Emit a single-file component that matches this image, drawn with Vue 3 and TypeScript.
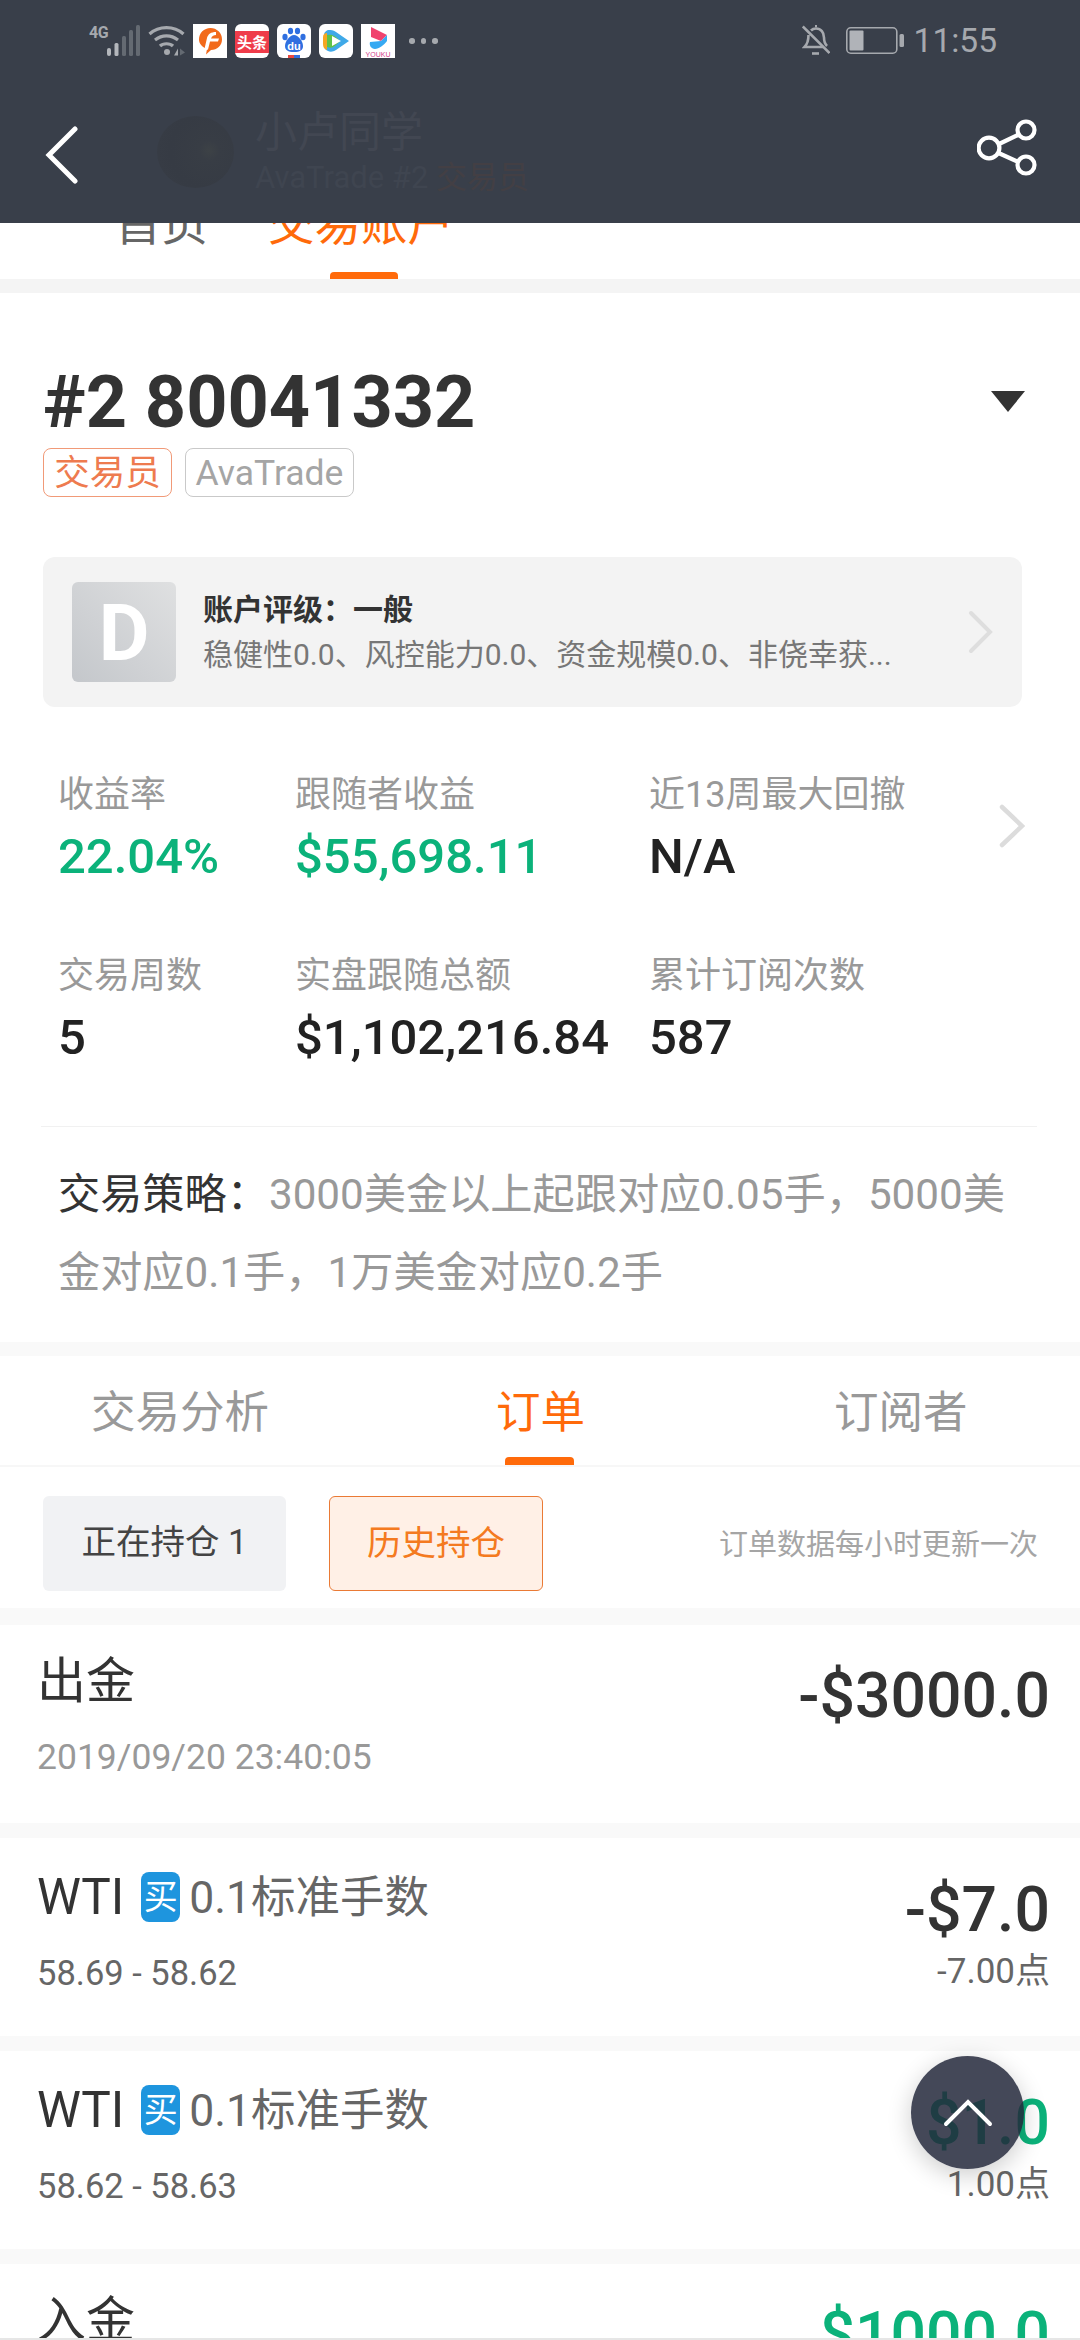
<script setup lang="ts">
const stats = [
  [{ l: '收益率', v: '22.04%', g: true }, { l: '跟随者收益', v: '$55,698.11', g: true }, { l: '近13周最大回撤', v: 'N/A', g: false }],
  [{ l: '交易周数', v: '5', g: false }, { l: '实盘跟随总额', v: '$1,102,216.84', g: false }, { l: '累计订阅次数', v: '587', g: false }],
]
const trades = [
  { range: '58.69 - 58.62', amount: '-$7.0', points: '-7.00点', green: false },
  { range: '58.62 - 58.63', amount: '$1.0', points: '1.00点', green: true },
]
</script>

<template>
  <div class="page">
    <header class="top">
      <div class="status">
        <div class="st-left">
          <span class="net">4G</span>
          <svg class="sig" width="34" height="31" viewBox="0 0 34 31"><rect x="0" y="23" width="4" height="8" rx="2" fill="#b4b7bc"/><rect x="7.5" y="18" width="4" height="13" rx="1.5" fill="#b4b7bc"/><rect x="15" y="11" width="4" height="20" rx="1.5" fill="#646a72"/><rect x="22" y="5" width="4" height="26" rx="1.5" fill="#646a72"/><rect x="29" y="0" width="4" height="31" rx="1.5" fill="#646a72"/></svg>
          <svg class="wifi" width="37" height="31" viewBox="0 0 37 31" fill="none" stroke="#a6a9ae" stroke-width="3.2"><path d="M1.5 9C11 0.5 26 0.5 35.5 9"/><path d="M7 15C14 9.5 23 9.5 30 15"/><path d="M12 21C15 18 22 18 25 21"/><circle cx="19" cy="27" r="3" fill="#a6a9ae" stroke="none"/><path d="M26 30.5l4-7v7z" fill="#a6a9ae" stroke="none"/><path d="M32 23.5l5 4-5 3z" fill="#646a72" stroke="none"/></svg>
          <svg class="app" width="34" height="34" viewBox="0 0 34 34"><rect width="34" height="34" fill="#fff"/><path d="M17.500 4a11.500 11.500 0 0 1 11.500 11.500c0 6-5 10.500-11 10.500l-5 4.500 1-5.500C9 23 6 19.500 6 15.500 6 9 11 4 17.500 4z" fill="#f26a1b"/><path d="M23 8c-5 0-8 2-9 6l-3 13 4-1.500 2-8h8l1-3h-8c1-3 3-3.500 5-3.500z" fill="#fff"/></svg>
          <svg class="app" width="34" height="34" viewBox="0 0 34 34"><rect width="34" height="34" rx="6" fill="#fff"/><rect y="7" width="34" height="22" fill="#ef3c4a"/><text x="17" y="23.500" text-anchor="middle" font-size="15" font-weight="700" fill="#fff" font-family="'Noto Sans CJK SC', sans-serif">头条</text></svg>
          <svg class="app" width="34" height="34" viewBox="0 0 34 34"><rect width="34" height="34" rx="6" fill="#fff"/><g fill="#2f6fe0"><ellipse cx="8" cy="13" rx="2.600" ry="3.200"/><ellipse cx="13.500" cy="7" rx="2.600" ry="3.200"/><ellipse cx="20.500" cy="7" rx="2.600" ry="3.200"/><ellipse cx="26" cy="13" rx="2.600" ry="3.200"/><path d="M17 11c4 0 9 6 9 11 0 4-3 6-9 6s-9-2-9-6c0-5 5-11 9-11z"/></g><text x="17" y="26" text-anchor="middle" font-size="11" font-weight="700" fill="#fff" font-family="'Liberation Sans', sans-serif">du</text><rect x="11" y="31" width="6" height="3" fill="#e8483f"/><rect x="17" y="31" width="6" height="3" fill="#2f6fe0"/></svg>
          <svg class="app" width="34" height="34" viewBox="0 0 34 34"><rect width="34" height="34" rx="6" fill="#fff"/><path d="M5 11c0-3 3-5 5-5 2 0 4 0 7 2l13 9-13 9c-3 2-6 2-8 1-3-1-4-3-4-6z" fill="#3fa9e8"/><path d="M4 13c0-3 2-4 4-4v17c-3-1-4-3-4-6z" fill="#f6a623"/><path d="M8 11c6-1 8 1 13 6-5 5-7 8-13 6z" fill="#5fc24a"/><path d="M13 12l9 5-9 5z" fill="#fff"/></svg>
          <svg class="app" width="34" height="34" viewBox="0 0 34 34"><rect width="34" height="34" fill="#fff"/><path d="M10 3l16 8-6 6-10-4z" fill="#f0436e"/><path d="M9 18l11-1 6-6v6c-3 4-8 8-12 8-4 0-6-4-5-7z" fill="#36a9f2"/><text x="17" y="33" text-anchor="middle" font-size="7" fill="#d2418c" font-family="'Liberation Sans', sans-serif">YOUKU</text></svg>
          <span class="dots"><i></i><i></i><i></i></span>
        </div>
        <div class="st-right">
          <svg class="bell" width="28" height="30" viewBox="0 0 28 30" fill="none" stroke="#a6a9ae" stroke-width="2.600"><path d="M9 5.500C10.500 4 12 3.500 14 3.500c5 0 8 4 8 9 0 4 1 6.500 3 8.500"/><path d="M6.500 10c0 5-1 9-4 12h19"/><path d="M0.800 1.500L27.500 28"/><path d="M10 28.500h7"/><path d="M13 1h2"/></svg>
          <svg class="batt" width="58" height="27" viewBox="0 0 58 27"><rect x="0.800" y="0.800" width="50" height="25.400" rx="4" fill="none" stroke="#a6a9ae" stroke-width="1.600"/><rect x="3.500" y="3.500" width="14" height="20" rx="1" fill="#b0b3b8"/><rect x="53.500" y="7" width="4.500" height="13" rx="1.500" fill="#a6a9ae"/></svg>
          <span class="time">11:55</span>
        </div>
      </div>
      <div class="nav">
        <svg class="back" width="33" height="58" viewBox="0 0 33 58" fill="none" stroke="#fff" stroke-width="5" stroke-linecap="round"><path d="M30 3L4 29l26 26"/></svg>
        <div class="who">
          <div class="avatar"></div>
          <div>
            <div class="who-name">小卢同学</div>
            <div class="who-sub">AvaTrade #2 <span class="who-role">交易员</span></div>
          </div>
        </div>
        <svg class="share" width="60" height="58" viewBox="0 0 60 58" fill="none" stroke="#fff" stroke-width="4.200"><circle cx="12" cy="29" r="10.400"/><circle cx="49" cy="11" r="8.500"/><circle cx="49" cy="46" r="8.500"/><path d="M22 25l19-9M21.500 34l20 9"/></svg>
      </div>
    </header>

    <div class="subtabs">
      <div class="subrow">
        <span class="st1">首页</span>
        <span class="st2">交易账户</span>
      </div>
      <i class="sub-bar"></i>
    </div>
    <div class="gap g1"></div>

    <section class="account">
      <div class="acc-head">
        <h1 class="acc-title">#2 80041332</h1>
        <span class="caret"></span>
      </div>
      <div class="tags">
        <span class="tag orange">交易员</span>
        <span class="tag grey">AvaTrade</span>
      </div>
      <div class="rating">
        <div class="badge">D</div>
        <div class="rating-body">
          <div class="r-title">账户评级：一般</div>
          <div class="r-desc">稳健性0.0、风控能力0.0、资金规模0.0、非侥幸获...</div>
        </div>
        <svg class="r-arrow" width="25" height="44" viewBox="0 0 25 44" fill="none" stroke="#dedede" stroke-width="4" stroke-linecap="round"><path d="M3 3l19 19L3 41"/></svg>
      </div>
      <div class="stats">
        <div class="stats-grid">
          <template v-for="(row, i) in stats" :key="i">
            <div v-for="s in row" :key="s.l" class="stat">
              <div class="s-label">{{ s.l }}</div>
              <div class="s-val" :class="{ green: s.g }">{{ s.v }}</div>
            </div>
          </template>
        </div>
        <svg class="s-arrow" width="26" height="44" viewBox="0 0 26 44" fill="none" stroke="#dcdcdc" stroke-width="4.500" stroke-linecap="round"><path d="M3 3l20 19L3 41"/></svg>
      </div>
      <div class="strategy"><span class="sg-k">交易策略：</span>3000美金以上起跟对应0.05手，5000美金对应0.1手，1万美金对应0.2手</div>
    </section>
    <div class="gap g2"></div>

    <nav class="tabs">
      <span class="tab t1">交易分析</span>
      <span class="tab on">订单<i></i></span>
      <span class="tab t3">订阅者</span>
    </nav>
    <div class="filters">
      <span class="fbtn plain">正在持仓 1</span>
      <span class="fbtn active">历史持仓</span>
      <span class="note">订单数据每小时更新一次</span>
    </div>
    <div class="gap g4"></div>

    <div class="order o-first">
      <div>
        <div class="o-name big">出金</div>
        <div class="o-date">2019/09/20 23:40:05</div>
      </div>
      <div class="o-amt first-amt">-$3000.0</div>
    </div>
    <div class="gap g3"></div>
    <template v-for="t in trades" :key="t.range">
      <div class="order">
        <div>
          <div class="o-line">
            <span class="o-name wti">WTI</span>
            <span class="buy">买</span>
            <span class="lot">0.1标准手数</span>
          </div>
          <div class="o-range">{{ t.range }}</div>
        </div>
        <div class="o-right">
          <div class="o-amt" :class="{ green: t.green }">{{ t.amount }}</div>
          <div class="o-pts">{{ t.points }}</div>
        </div>
      </div>
      <div class="gap g3"></div>
    </template>
    <div class="order o-last">
      <div class="o-name big">入金</div>
      <div class="o-amt green">$1000.0</div>
    </div>

    <div class="fab">
      <svg width="50" height="28" viewBox="0 0 50 28" fill="none" stroke="#fff" stroke-width="4" stroke-linecap="round"><path d="M3 25L25 3l22 22"/></svg>
    </div>
    <div class="bottom-line"></div>
  </div>
</template>

<style>
html, body { margin: 0; background: #fff; }
</style>

<style scoped>
.page {
  position: relative;
  width: 1080px;
  height: 2340px;
  overflow: hidden;
  background: #fff;
  font-family: Roboto, "Noto Sans CJK SC", sans-serif;
  color: #333;
}
.top { height: 223px; background: #393f4a; position: relative; z-index: 2; }
.status { height: 80px; padding: 24px 83px 0 89px; box-sizing: border-box; display: flex; justify-content: space-between; align-items: flex-start; }
.st-left { display: flex; align-items: flex-start; height: 34px; }
.net { font-size: 16px; font-weight: 700; color: #a6a9ae; width: 18px; line-height: 16px; margin-top: 1px; letter-spacing: -0.5px; }
.sig, .wifi { margin-top: 1px; }
.wifi { margin-left: 7px; }
.app { margin-left: 8px; flex: none; }
.dots { display: flex; gap: 6px; margin: 14px 0 0 14px; }
.dots i { width: 5.5px; height: 5.5px; border-radius: 50%; background: #a6a9ae; }
.st-right { display: flex; align-items: flex-start; height: 34px; color: #a6a9ae; }
.bell { margin-top: 1px; }
.batt { margin: 3px 0 0 16px; }
.time { font-size: 33.5px; margin-left: 10px; line-height: 34px; }
.nav { height: 143px; padding: 7px 43px 0 45px; box-sizing: border-box; display: flex; align-items: center; }
.who { display: flex; align-items: center; margin-left: 79px; flex: 1; }
.avatar { width: 77px; height: 72px; border-radius: 50%; background: radial-gradient(circle at 68% 48%, #3d4246 0, #383d45 16%, #363b44 60%, #383d46 100%); margin-right: 21px; margin-top: -6px; }
.who-name { font-size: 42px; color: #424752; line-height: 46px; margin-top: -4px; }
.who-sub { font-size: 31px; color: #3f4550; line-height: 36px; margin-top: 4px; }
.who-role { color: #433f44; }
.share { margin-top: -14px; }

.subtabs { height: 56px; position: relative; overflow: hidden; }
.subrow { position: absolute; left: 115px; top: -27px; font-size: 46.5px; line-height: 56px; display: flex; gap: 60px; }
.st1 { color: #666; }
.st2 { color: #ff6a0a; }
.sub-bar { position: absolute; left: 330px; bottom: 0; width: 68px; height: 7px; border-radius: 4px 4px 0 0; background: #ff6a0a; }
.g1 { height: 14px; background: #f4f4f4; }
.g2 { height: 14px; background: #f9f9f9; }
.g3 { height: 15px; background: #f9f9f9; }
.g4 { height: 17px; background: #f9f9f9; }

.account { padding: 70px 43px 30px; }
.acc-head { display: flex; justify-content: space-between; align-items: center; padding-right: 12px; height: 80px; }
.acc-title { margin: 0; font-size: 72px; font-weight: 700; line-height: 80px; color: #333; }
.caret { width: 0; height: 0; border-left: 17.5px solid transparent; border-right: 17.5px solid transparent; border-top: 21px solid #333; margin-top: -4px; }
.tags { display: flex; gap: 13px; margin-top: 5px; }
.tag { box-sizing: border-box; height: 49px; line-height: 49px; border-radius: 8px; border: 1.5px solid; font-size: 35.5px; text-align: center; }
.tag.orange { width: 129px; color: #ee7b4f; border-color: #f19a78; }
.tag.grey { width: 169px; color: #a5a5a5; border-color: #c9c9c9; }
.rating { margin-top: 60px; width: 979px; height: 150px; box-sizing: border-box; background: #f3f3f3; border-radius: 12px; display: flex; align-items: center; padding: 0 29px; }
.badge { width: 104px; height: 100px; background: linear-gradient(45deg, #c4c7cb, #dfe0e1); border-radius: 6px; color: #fff; font-size: 78px; font-weight: 700; line-height: 104px; text-align: center; flex: none; }
.rating-body { flex: 1; margin-left: 27px; }
.r-title { font-size: 30px; font-weight: 700; line-height: 40px; color: #333; }
.r-desc { font-size: 30px; line-height: 40px; color: #777; margin-top: 5px; white-space: nowrap; }
.stats { position: relative; margin-top: 65px; padding-left: 15px; }
.stats-grid { display: grid; grid-template-columns: 237px 354px auto; row-gap: 68px; }
.s-label { font-size: 36px; line-height: 46px; color: #999; white-space: nowrap; }
.s-val { font-size: 49px; line-height: 56px; font-weight: 500; color: #222; margin-top: 11px; white-space: nowrap; }
.green { color: #0bb27a !important; }
.s-arrow { position: absolute; right: 12px; top: 32px; }
.strategy { margin-top: 60px; width: 996px; margin-left: -2px; box-sizing: border-box; border-top: 1px solid #f1f1f1; padding: 29px 0 0 17px; font-size: 42.2px; line-height: 78px; color: #999; }
.sg-k { color: #333; }

.tabs { height: 109px; border-bottom: 2px solid #f7f7f7; position: relative; font-size: 44.5px; color: #999; }
.tab { position: absolute; top: 29px; line-height: 56px; }
.t1 { left: 91px; }
.on { left: 496px; color: #ff6a0a; }
.on i { position: absolute; left: 9px; top: 72px; width: 69px; height: 8px; border-radius: 4px 4px 0 0; background: #ff6a0a; }
.t3 { left: 834px; }
.filters { height: 141px; padding: 29px 43px 0; box-sizing: border-box; display: flex; align-items: flex-start; }
.fbtn { box-sizing: border-box; height: 95px; line-height: 93px; border-radius: 6px; text-align: center; font-size: 34.5px; }
.plain { width: 243px; background: #f1f2f4; color: #444; }
.active { width: 214px; margin-left: 43px; background: #fff0e6; border: 1.5px solid #ea7a35; color: #f47a20; }
.note { margin-left: auto; margin-right: -1px; font-size: 29px; color: #a5a5a5; line-height: 99px; }

.order { height: 198px; box-sizing: border-box; padding: 0 30px 0 37px; display: flex; justify-content: space-between; }
.o-first, .o-last { padding-top: 26px; }
.o-name { font-size: 49px; line-height: 62px; color: #333; }
.wti { font-size: 49.5px; }
.o-date { font-size: 35.5px; color: #999; line-height: 44px; margin-top: 22px; }
.first-amt { margin-top: 10px; }
.o-line { display: flex; align-items: center; padding-top: 27px; }
.buy { width: 39px; height: 50px; margin: -1px 0 0 17px; border-radius: 8px; background: #1e95de; color: #fff; text-align: center; line-height: 50px; font-size: 34px; }
.lot { font-size: 44.5px; color: #666; margin: 2px 0 0 9px; line-height: 62px; }
.o-range { font-size: 34.5px; color: #666; line-height: 44px; margin-top: 22px; }
.o-right { text-align: right; }
.o-amt { font-size: 62.5px; font-weight: 500; color: #333; line-height: 70px; white-space: nowrap; }
.o-right .o-amt { margin-top: 37px; }
.o-pts { font-size: 35px; color: #666; line-height: 40px; margin-top: 7px; }
.o-last .o-amt { margin-top: 10px; }

.fab { position: absolute; left: 911px; top: 2056px; width: 113px; height: 113px; border-radius: 50%; background: rgba(35, 40, 59, 0.85); box-shadow: 0 6px 24px rgba(0, 0, 0, 0.2); display: flex; align-items: center; justify-content: center; z-index: 3; }
.bottom-line { position: absolute; left: 0; right: 0; bottom: 0; height: 2px; background: #e6e6e6; }
</style>
